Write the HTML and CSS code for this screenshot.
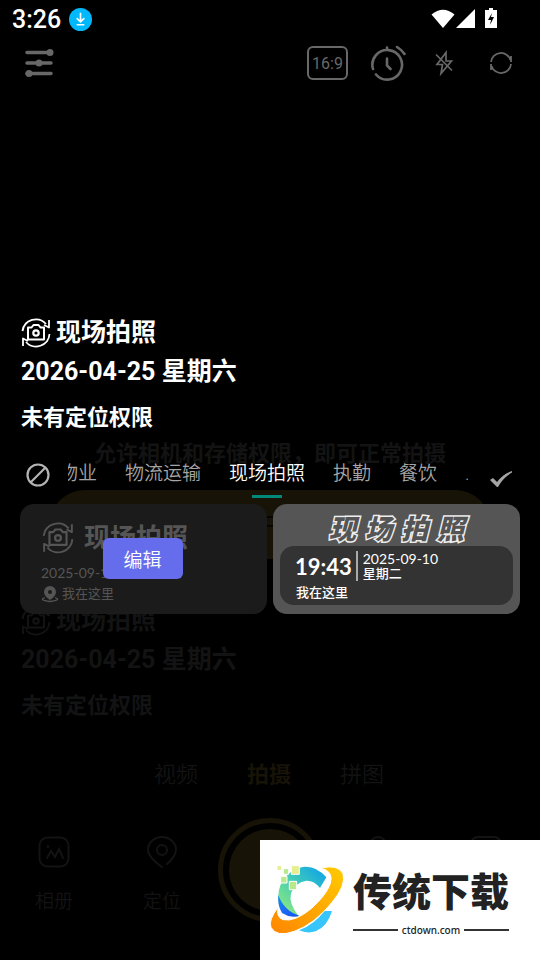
FILE: index.html
```
<!DOCTYPE html>
<html lang="zh-CN">
<head>
<meta charset="utf-8" />
<meta name="viewport" content="width=device-width,initial-scale=1.0"/>
<title>现场拍照</title>
<link rel="stylesheet" href="styles.css">
</head>
<body>
<svg class="defs" aria-hidden="true">
<symbol id="cam" viewBox="0 0 30 30">
<g fill="none" stroke="currentColor" stroke-width="1.8" stroke-linejoin="round">
<path d="M1.500 13A13.500 13.500 0 0 1 25 6M28 2v7.500L23 7M28.500 16A13.500 13.500 0 0 1 5 24M2 28v-7.500L7 23"/>
<path stroke-width="2" d="M7 9.500h3.500l2-2.500h5l2 2.500H23v12H7z"/>
<circle stroke-width="2.200" cx="15" cy="15" r="2.700"/>
</g>
</symbol>
</svg>

<div class="screen">
<header class="status">
<span class="clock">3:26</span>
<svg class="down" viewBox="0 0 24 24"><circle cx="12" cy="12" r="12" fill="#00b8fc"/><path d="M12 5v9M8 10.500l4 4 4-4M8 17.500h8" fill="none" stroke="#fff" stroke-width="1.700"/></svg>
<svg class="signals" width="68" height="22" viewBox="0 0 68 22" fill="#fff">
<path d="M.5 6.500Q12 -3 23.500 6.500L12 20z"/><path d="M44 1v19H25z"/>
<path d="M58 0h4v2h4v18H54V2h4z"/><path d="M61 5l-4 7h3l-1 5 4-8h-3l1-4z" fill="#000"/>
</svg>
</header>

<nav class="tools">
<button class="tool menu" aria-label="设置"><svg width="30" height="30" viewBox="0 0 30 30" stroke="#686868" stroke-width="3.500" stroke-linecap="round" fill="#686868"><path d="M3 4.500h24M3 15h24M3 25.500h24"/><g stroke="none"><circle cx="26" cy="4.500" r="3.500"/><circle cx="15" cy="15" r="3.500"/><circle cx="5" cy="25.500" r="3.500"/></g></svg></button>
<button class="ratio">16:9</button>
<button class="tool timer" aria-label="定时"><svg width="36" height="36" viewBox="0 0 36 36" fill="none" stroke="#686868" stroke-width="2.600" stroke-linecap="round"><path d="M3 24A14.800 14.800 0 1 1 6 29.500M17 2.500v2M17 13.500v7l3.500 3.500M27 2q5 3 7.500 7"/></svg></button>
<button class="tool flash" aria-label="闪光灯"><svg width="20" height="26" viewBox="0 0 20 26" fill="none" stroke="#686868" stroke-width="1.700"><path d="M12 2.500L3 14.500h5.500L7 23.500 17.500 11H12zM2 4.500l16 16"/></svg></button>
<button class="tool flip" aria-label="翻转"><svg width="24" height="24" viewBox="0 0 24 24" fill="none" stroke="#686868" stroke-width="1.800"><path d="M2 11A10 10 0 0 1 21.500 9M22 5v6M22 13A10 10 0 0 1 2.500 15M2 19v-6"/></svg></button>
</nav>

<main class="stage">
<section class="camera">
<p class="notice">允许相机和存储权限，即可正常拍摄</p>
<button class="allow">去开启</button>
<div class="mark">
<div class="mark-title"><svg class="cam"><use href="#cam"/></svg>现场拍照</div>
<div class="mark-date">2026-04-25 星期六</div>
<div class="mark-place">未有定位权限</div>
</div>
<nav class="modes">
<a href="#video">视频</a><a href="#photo" class="on">拍摄</a><a href="#puzzle">拼图</a>
</nav>
<div class="bottom">
<button class="item"><svg width="32" height="32" viewBox="0 0 32 32"><rect x="1.500" y="1.500" width="29" height="29" rx="8"/><path d="M9 22l4-7 4 6 4-8 4 9M10 10v1"/></svg>相册</button>
<button class="item"><svg width="32" height="32" viewBox="0 0 32 32"><path d="M16 31Q2 21 2 14a14 13 0 0 1 28 0q0 6-9 14"/><circle cx="16" cy="14" r="5"/></svg>定位</button>
<button class="shutter" aria-label="拍照"></button>
<button class="item blank" aria-label="我的"><svg width="32" height="32" viewBox="0 0 32 32"><circle cx="16" cy="9" r="8"/><path d="M3 31q0-12 13-12t13 12"/></svg></button>
<button class="item blank" aria-label="水印"><svg width="32" height="32" viewBox="0 0 32 32"><rect x="1" y="1" width="30" height="29" rx="7"/></svg></button>
</div>
</section>

<section class="picker">
<div class="mark">
<div class="mark-title"><svg class="cam"><use href="#cam"/></svg>现场拍照</div>
<div class="mark-date">2026-04-25 星期六</div>
<div class="mark-place">未有定位权限</div>
</div>
<div class="tabbar">
<button class="tool" aria-label="无水印"><svg width="24" height="24" viewBox="0 0 24 24" fill="none" stroke="#b4b4b4" stroke-width="2.200"><circle cx="12" cy="12" r="10.500"/><path d="M19.500 4.500l-15 15"/></svg></button>
<nav class="tabs">
<a href="#t1">物业</a><a href="#t2">物流运输</a><a href="#t3" class="on">现场拍照</a><a href="#t4">执勤</a><a href="#t5">餐饮</a><a href="#t6">.</a>
</nav>
<button class="tool ok" aria-label="确定"><svg width="24" height="20" viewBox="0 0 24 20" fill="#a5a5a5"><path d="M1 11l3-2 4 4Q14 5 23 2v1.500Q14 9 9 18H8z"/></svg></button>
</div>
<div class="cards">
<article class="card first">
<div class="card-title"><svg class="cam"><use href="#cam"/></svg>现场拍照</div>
<div class="card-date">2025-09-10</div>
<div class="card-place"><svg width="18" height="18" viewBox="0 0 18 18"><path fill="#555" fill-rule="evenodd" d="M9 1a6 6 0 0 1 6 6q0 4-6 8Q3 11 3 7a6 6 0 0 1 6-6zm0 4a2 2 0 1 0 0 4 2 2 0 0 0 0-4z"/><path d="M4 12.500Q-3 15 9 16.500q12-1.500 5-4" fill="none" stroke="#555" stroke-width="1.300"/></svg>我在这里</div>
<button class="edit">编辑</button>
</article>
<article class="card second">
<div class="outline"><span>现</span><span>场</span><span>拍</span><span>照</span></div>
<div class="panel">
<div class="when"><span class="time">19:43</span><div class="day"><span class="num">2025-09-10</span><span>星期二</span></div></div>
<div class="where">我在这里</div>
</div>
</article>
</div>
</section>
</main>

<aside class="brand">
<svg class="logo" width="90" height="80" viewBox="0 0 270 240">
<defs>
<linearGradient id="c" x1="0" y1="1" x2="1" y2="0"><stop offset="0" stop-color="#9bef72"/><stop offset=".5" stop-color="#45cdb5"/><stop offset="1" stop-color="#079fee"/></linearGradient>
<linearGradient id="o" x1="0" y1="1" x2="1" y2="0"><stop offset="0" stop-color="#ff8500"/><stop offset="1" stop-color="#ffcb00"/></linearGradient>
<linearGradient id="b" x1="0" y1="0" x2="1" y2="1"><stop offset="0" stop-color="#178bf4"/><stop offset="1" stop-color="#1c4df0"/></linearGradient>
</defs>
<path fill="url(#c)" d="M187 52Q158 18 122 20Q72 27 49 76Q37 110 48 146Q75 170 105 170Q73 131 81 100Q92 68 127 62Q150 61 168 84Z"/>
<path fill="url(#b)" d="M43 105Q40 135 54 159Q80 176 106 167Q60 153 43 105Z"/>
<path fill="#36c6fc" d="M105 211Q152 193 181 153H204Q190 200 155 214Q130 222 105 211Z"/>
<path fill="url(#o)" stroke="#fff" stroke-width="3" d="M171 25Q221 11 237 41Q247 76 204 127Q152 192 91 214Q37 233 21 202Q12 181 43 141Q35 171 57 179Q92 187 143 145Q186 106 199 71Q210 33 171 25Z"/>
<g fill="#b8e98c" stroke="#fff" stroke-width="3"><path d="M76 64h22v25H76zM50 49h19v20H50zM58 26h16v17H58z"/><path fill="#e5ef8f" d="M82 17h24v26H82zM39 17h14v14H39z"/></g>
</svg>
<div class="brand-text"><strong>传统下载</strong><div class="site">ctdown.com</div></div>
</aside>
</div>
</body>
</html>
```
FILE: styles.css
```
* {
    box-sizing: border-box;
}
body {
    margin: 0;
    background: #000;
    color: #fff;
    font-family: Roboto, "Noto Sans CJK SC", sans-serif;
}
p {
    margin: 0;
}
a {
    color: inherit;
    text-decoration: none;
}
button {
    padding: 0;
    border: 0;
    background: none;
    color: inherit;
    font: inherit;
}
svg {
    display: block;
    flex: none;
}
.defs {
    display: none;
}
.screen {
    position: relative;
    display: flex;
    flex-direction: column;
    min-height: 100vh;
}

/* top bars */
.status {
    display: flex;
    align-items: center;
    height: 38px;
    padding: 0 41px 0 12px;
    gap: 8px;
}
.clock {
    font-size: 25px;
    font-weight: 500;
}
.down {
    width: 23px;
    height: 23px;
}
.signals {
    margin-left: auto;
}
.tools {
    display: flex;
    align-items: center;
    height: 50px;
    padding: 0 27px 0 24px;
}
.tool {
    display: flex;
    align-items: center;
    justify-content: center;
}
.menu {
    margin-right: auto;
}
.ratio {
    width: 41px;
    height: 34px;
    border: 2px solid #686868;
    border-radius: 6px;
    color: #686868;
    font-size: 16px;
}
.timer {
    margin-left: 22px;
}
.flash {
    margin-left: 28px;
}
.flip {
    margin-left: 35px;
}

/* camera screen behind the picker */
.stage {
    position: relative;
    display: flex;
    flex: 1;
}
.camera {
    display: flex;
    flex: 1;
    flex-direction: column;
    padding-top: 350px;
    color: #131313;
}
.notice {
    font-size: 22px;
    font-weight: 700;
    line-height: 32px;
    text-align: center;
}
.allow {
    height: 69px;
    margin: 20px 50px 45px;
    border-radius: 35px;
    background: #171307;
    color: #050400;
    font-size: 24px;
}
.mark {
    padding: 0 21px;
    font-weight: 700;
}
.mark-title {
    display: flex;
    align-items: center;
    gap: 5px;
    font-size: 25px;
    line-height: 34px;
}
.cam {
    width: 30px;
    height: 30px;
}
.mark-date {
    margin-top: 4px;
    font-size: 25px;
    line-height: 36px;
}
.mark-place {
    margin-top: 12px;
    font-size: 22px;
    line-height: 32px;
}
.modes {
    display: flex;
    justify-content: center;
    gap: 49px;
    margin-top: 37px;
    padding-right: 2px;
    font-size: 22px;
    font-weight: 350;
    line-height: 32px;
}
.modes .on {
    color: #171307;
    font-weight: 700;
}
.bottom {
    display: grid;
    grid-template-columns: repeat(5, 1fr);
    align-items: center;
    justify-items: center;
    margin-top: 27px;
}
.item {
    display: flex;
    flex-direction: column;
    align-items: center;
    gap: 20px;
    padding-top: 12px;
    font-size: 19px;
    font-weight: 350;
    line-height: 28px;
}
.item svg {
    fill: none;
    stroke: #131313;
    stroke-width: 2;
    stroke-linecap: round;
}
.blank {
    padding-bottom: 48px;
}
.shutter {
    width: 104px;
    height: 104px;
    border: 5px solid #171307;
    border-radius: 50%;
    background: #171307;
    background-clip: content-box;
    padding: 6px;
}

/* watermark picker */
.picker {
    position: absolute;
    inset: 0 0 auto;
    padding-top: 228px;
}
.tabbar {
    display: flex;
    align-items: center;
    height: 48px;
    margin-top: 17px;
    padding: 0 27px 0 26px;
}
.tabs {
    display: flex;
    flex: 1;
    gap: 28px;
    margin: 0 21px 0 18px;
    overflow: hidden;
    color: #a5a5a5;
    font-size: 19px;
    font-weight: 350;
    line-height: 32px;
    white-space: nowrap;
}
.tabs a {
    flex: none;
    padding: 5px 0 8px;
}
.tabs a:first-child {
    margin-left: -9px;
}
.tabs .on {
    background: linear-gradient(#00897b, #00897b) bottom / 30px 3px no-repeat;
    color: #fff;
}
.ok {
    padding-top: 8px;
}
.cards {
    display: grid;
    grid-template-columns: 1fr 1fr;
    gap: 6px;
    padding: 5px 20px 0;
}
.card {
    position: relative;
    height: 110px;
    border-radius: 14px;
}
.first {
    padding: 17px 23px 0 21px;
    background: #1b1b1b;
    color: #555;
}
.first .cam {
    width: 34px;
    height: 32px;
}
.card-title {
    display: flex;
    align-items: center;
    gap: 9px;
    font-size: 26px;
    font-weight: 700;
    line-height: 34px;
}
.card-date {
    margin-top: 7px;
    font-family: Lato, sans-serif;
    font-size: 14px;
    line-height: 22px;
}
.card-place {
    display: flex;
    align-items: center;
    gap: 3px;
    font-size: 13px;
    line-height: 20px;
}
.edit {
    position: absolute;
    top: 34px;
    left: calc(50% - 41px);
    width: 80px;
    height: 41px;
    border-radius: 6px;
    background: #666dec;
    color: #fff;
    font-size: 19px;
    font-weight: 350;
}
.second {
    display: flex;
    flex-direction: column;
    gap: 2px;
    padding: 8px 7px 9px;
    background: #555;
}
.outline {
    display: flex;
    justify-content: center;
    gap: 9px;
    color: #555;
    font-family: "Noto Sans CJK SC", sans-serif;
    font-size: 27px;
    font-style: italic;
    font-weight: 900;
    line-height: 32px;
    -webkit-text-stroke: 3px #eee;
    paint-order: stroke fill;
}
.panel {
    flex: 1;
    padding: 5px 15px 0;
    border-radius: 14px;
    background: #333;
    font-size: 13px;
    font-weight: 500;
}
.when {
    display: flex;
    align-items: center;
    gap: 4px;
}
.time {
    font-family: Lato, sans-serif;
    font-size: 22px;
    font-weight: 700;
}
.day {
    display: flex;
    flex-direction: column;
    padding-left: 5px;
    border-left: 2px solid #aaa;
    line-height: 15px;
}
.num {
    font-family: Lato, sans-serif;
    font-size: 14px;
    font-weight: 400;
}
.where {
    padding-left: 1px;
    line-height: 24px;
}

/* site badge */
.brand {
    position: absolute;
    right: 0;
    bottom: 0;
    display: flex;
    align-items: center;
    width: 280px;
    height: 120px;
    padding-left: 4px;
    background: #fff;
    color: #222;
}
.brand-text {
    width: 156px;
    margin-left: -1px;
    font-family: "Noto Sans CJK SC", sans-serif;
}
.brand-text strong {
    display: block;
    font-size: 39px;
    font-weight: 900;
    line-height: 54px;
    white-space: nowrap;
}
.site {
    display: flex;
    align-items: center;
    gap: 4px;
    margin-top: 6px;
    font-family: "Noto Sans", sans-serif;
    font-size: 10px;
    font-weight: 500;
    line-height: 16px;
}
.site::before,
.site::after {
    flex: 1;
    height: 2px;
    background: #333;
    content: "";
}
```
